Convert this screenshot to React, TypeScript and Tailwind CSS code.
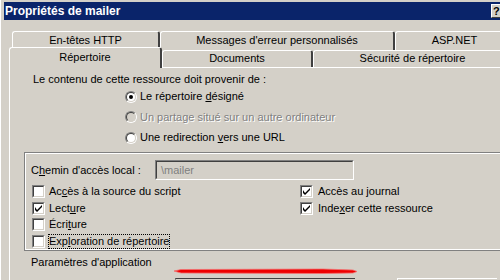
import React from "react";

const Radio = ({ checked, disabled }: { checked?: boolean; disabled?: boolean }) => (
  <div className="w-[12px] h-[12px] rounded-full border border-t-[#808080] border-l-[#808080] border-b-white border-r-white shrink-0">
    <div
      className={`w-full h-full rounded-full border border-t-[#404040] border-l-[#404040] border-b-[#d4d0c8] border-r-[#d4d0c8] flex items-center justify-center ${
        disabled ? "bg-[#d4d0c8]" : "bg-white"
      }`}
    >
      {checked && <div className="w-[4px] h-[4px] rounded-full bg-black" />}
    </div>
  </div>
);

const Check = ({ checked }: { checked?: boolean }) => (
  <div className="w-[13px] h-[13px] border border-t-[#808080] border-l-[#808080] border-b-white border-r-white shrink-0">
    <div className="w-full h-full border border-t-[#404040] border-l-[#404040] border-b-[#d4d0c8] border-r-[#d4d0c8] bg-white">
      {checked && (
        <svg width="9" height="9" viewBox="0 0 9 9" className="block">
          <path d="M1 3 v3 l2 2 l5 -5 v-2 l-5 5 z" fill="#000" />
        </svg>
      )}
    </div>
  </div>
);

const Tab = ({ w, children, cls = "" }: { w: string; children: React.ReactNode; cls?: string }) => (
  <div
    className={`${w} ${cls} shrink-0 flex items-center justify-center border-t border-l border-t-white border-l-white border-r-2 border-r-[#404040] rounded-tl-[3px] rounded-tr-[3px] bg-[#d4d0c8]`}
  >
    <span className="-mt-[1px]">{children}</span>
  </div>
);

export default function App() {
  return (
    <div
      className="w-[500px] h-[280px] overflow-hidden bg-[#d4d0c8] text-black text-[11px] leading-[13px] relative"
      style={{ fontFamily: '"Liberation Sans", Arial, sans-serif' }}
    >
      <div className="w-[520px] h-full pt-[2px] pl-[3px] border-l border-l-white">
        {/* Title bar */}
        <div className="h-[18px] bg-[#0a246a] flex items-center justify-between pl-[1px] pr-[13px]">
          <span className="text-white font-bold text-[12px]">Propriétés de mailer</span>
          <div className="w-[16px] h-[14px] bg-[#d4d0c8] border border-t-white border-l-white border-b-[#404040] border-r-[#404040] flex items-center justify-start pl-[1px] font-bold text-[11px] leading-[11px]">
            ?
          </div>
        </div>

        {/* Tabs */}
        <div className="ml-[5px] w-[510px]">
          <div className="flex pl-[3px] h-[19px] mt-[11px]">
            <Tab w="w-[148px]">En-têtes HTTP</Tab>
            <Tab w="w-[235px]">Messages d'erreur personnalisés</Tab>
            <Tab w="w-[120px]">ASP.NET</Tab>
          </div>
          <div className="flex items-end h-[17px]">
            <Tab w="w-[153px]" cls="h-[21px] -mb-[1px] relative z-10">
              Répertoire
            </Tab>
            <Tab w="w-[151px]" cls="h-[17px]">Documents</Tab>
            <Tab w="w-[200px]" cls="h-[17px]">Sécurité de répertoire</Tab>
          </div>

          {/* Panel */}
          <div className="border-t border-l border-t-white border-l-white h-[220px] pt-[5px]">
            <div className="pl-[23px]">Le contenu de cette ressource doit provenir de :</div>
            <div className="ml-[115px] mt-[4px] flex flex-col gap-[7.5px]">
              <div className="flex items-center gap-[3px] h-[13px]">
                <Radio checked />
                <span>
                  Le répertoire <u>d</u>ésigné
                </span>
              </div>
              <div className="flex items-center gap-[3px] h-[13px]">
                <Radio disabled />
                <span className="text-[#808080] [text-shadow:1px_1px_0_#ffffff]">
                  Un partage situé sur un autre ordinateur
                </span>
              </div>
              <div className="flex items-center gap-[3px] h-[13px]">
                <Radio />
                <span>
                  Une redirection <u>v</u>ers une URL
                </span>
              </div>
            </div>

            {/* Group box */}
            <div className="ml-[14px] mt-[8px] border-t border-l border-b border-t-[#808080] border-l-[#808080] border-b-[#808080]">
              <div className="border-t border-l border-b border-t-white border-l-white border-b-white pb-[1px]">
                <div className="flex items-center mt-[6px] h-[20px]">
                  <span className="pl-[5px] w-[129px]">
                    C<u>h</u>emin d'accès local :
                  </span>
                  <div className="w-[199px] h-[20px] border border-t-[#808080] border-l-[#808080] border-b-white border-r-white">
                    <div className="w-full h-full border border-t-[#404040] border-l-[#404040] border-b-[#d4d0c8] border-r-[#d4d0c8] pl-[4px] flex items-center text-[#808080]">
                      \mailer
                    </div>
                  </div>
                </div>
                <div className="flex mt-[5px] pl-[6px]">
                  <div className="w-[268px] flex flex-col gap-[3.67px]">
                    <div className="flex items-center gap-[4px] h-[13px]">
                      <Check />
                      <span>
                        Ac<u>c</u>ès à la source du script
                      </span>
                    </div>
                    <div className="flex items-center gap-[4px] h-[13px]">
                      <Check checked />
                      <span>
                        Lect<u>u</u>re
                      </span>
                    </div>
                    <div className="flex items-center gap-[4px] h-[13px]">
                      <Check />
                      <span>
                        Écri<u>t</u>ure
                      </span>
                    </div>
                    <div className="flex items-center gap-[3px] h-[13px]">
                      <Check />
                      <span className="border border-dotted border-black px-[0px] leading-[13px] h-[15px] flex items-center">
                        Exp<u>l</u>oration de répertoire
                      </span>
                    </div>
                  </div>
                  <div className="flex flex-col gap-[3.67px]">
                    <div className="flex items-center gap-[5px] h-[13px]">
                      <Check checked />
                      <span>
                        Accès au <u>j</u>ournal
                      </span>
                    </div>
                    <div className="flex items-center gap-[5px] h-[13px]">
                      <Check checked />
                      <span>
                        Inde<u>x</u>er cette ressource
                      </span>
                    </div>
                  </div>
                </div>
              </div>
            </div>

            <div className="pl-[21px] mt-[5px]">Paramètres d'application</div>
            <div className="relative flex mt-[9px]">
              <div className="ml-[165px] w-[180px] h-[10px] border-t border-l border-t-[#404040] border-l-[#808080]" />
              <div className="ml-[42px] w-[100px] h-[10px] border-t border-l border-t-white border-l-white" />
              <svg
                className="absolute left-[163px] top-[-11px]"
                width="186"
                height="9"
                viewBox="0 0 186 9"
              >
                <path
                  d="M1 4 L8 2.5 L150 2 L180 3 L184 4.5 L180 6 L150 6.5 L8 6 Z"
                  fill="#ee0000"
                  stroke="#f47070"
                  strokeWidth="0.8"
                />
              </svg>
            </div>
          </div>
        </div>
      </div>
    </div>
  );
}
